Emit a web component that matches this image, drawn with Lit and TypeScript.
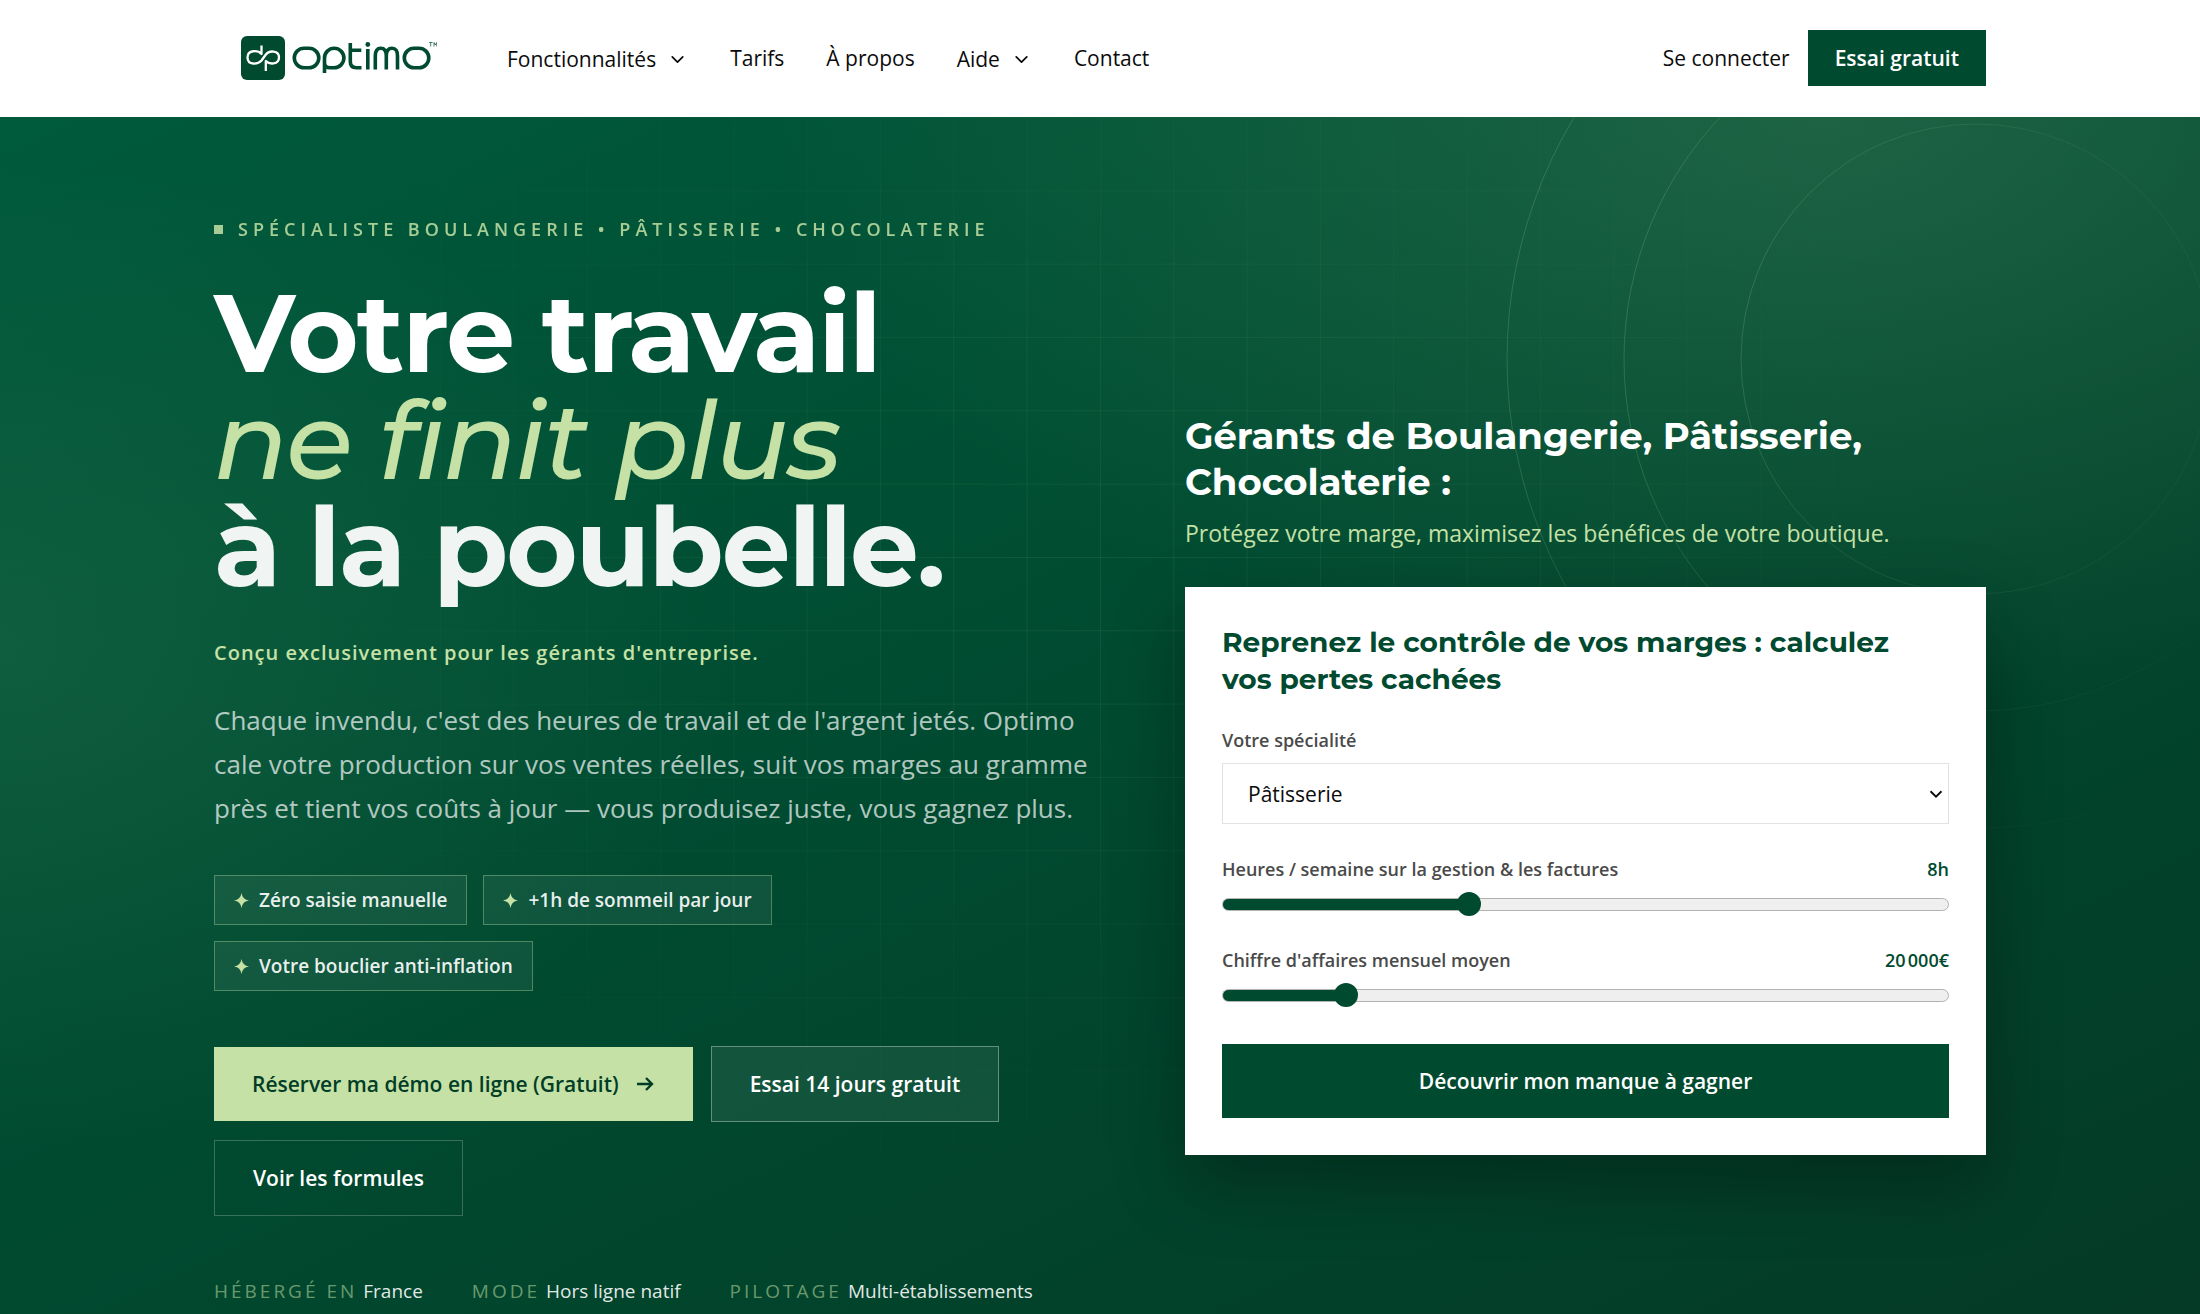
import { LitElement, html, css, svg } from "lit";
import { customElement, state } from "lit/decorators.js";

const NAV = [
  { label: "Fonctionnalités", menu: true },
  { label: "Tarifs", menu: false },
  { label: "À propos", menu: false },
  { label: "Aide", menu: true },
  { label: "Contact", menu: false },
];
const CHIPS = ["Zéro saisie manuelle", "+1h de sommeil par jour", "Votre bouclier anti-inflation"];
const FACTS = [
  ["Hébergé en", "France"],
  ["Mode", "Hors ligne natif"],
  ["Pilotage", "Multi-établissements"],
];
const RINGS = [235, 352, 469];

const chevron = html`<svg class="chev" viewBox="0 0 24 24" aria-hidden="true"><path d="M6 9l6 6 6-6" /></svg>`;

@customElement("app-header")
export class AppHeader extends LitElement {
  static styles = css`
    :host { display: block; background: #fff; }
    .bar { max-width: 1772px; margin: 0 auto; padding: 30px 0 31px; display: flex; align-items: center; }
    .logo { margin-left: 27px; display: block; width: 196px; height: 44px; }
    nav { display: flex; align-items: center; gap: 42px; margin-left: 70px; flex: 1; }
    a, button { font: 500 21px/28px "Open Sans", sans-serif; color: #0b0b0b; text-decoration: none; }
    nav button { background: none; border: 0; padding: 2px 0 0; display: flex; align-items: center; gap: 11px; }
    .chev { width: 21px; height: 21px; fill: none; stroke: currentColor; stroke-width: 2; stroke-linecap: round; stroke-linejoin: round; }
    .actions { display: flex; align-items: center; gap: 18px; }
    .cta { background: #004a30; color: #fff; padding: 14px 27px; font-weight: 600; }
  `;
  render() {
    return html`<header class="bar">
      <a class="logo" href="#" aria-label="Optimo">
        <svg width="196" height="44" viewBox="0 0 196 44" fill="none">
          <rect x="0" y="0" width="44" height="44" rx="6" fill="#004a30" />
          <path d="M20.500 9.500v8.500C17 14 6.500 13.500 6.500 21.500S17 28.500 20.500 24.500l4-5.500C28 14 38 14 38 21.500S28 28.500 24.800 25V35" stroke="#fff" stroke-width="2.300" stroke-linejoin="round" />
          <g stroke="#004a30" stroke-width="3.600">
            <rect x="53.300" y="12.300" width="24.500" height="19.400" rx="9.700" />
            <path d="M83.500 37V22a9.700 9.700 0 0 1 19.400 0a9.700 9.700 0 0 1-9.700 9.700h-4q-5.700 0-5.700-5" />
            <path d="M109.300 7v18.500q0 6.200 6 6.200h5.200M109.300 14.300h11M126.800 13v20.500M134.300 33.500V20q0-7.700 5.500-7.700t5.500 7.700v13.500M145.300 20q0-7.700 5.700-7.700t5.500 7.700v13.500" />
            <rect x="163.300" y="12.300" width="24.500" height="19.400" rx="9.700" />
          </g>
          <circle cx="126.800" cy="8.500" r="2.400" fill="#004a30" />
          <path d="M188 6.500h3.500M189.700 6.500v4M193 10.500v-4l1.400 2.500 1.400-2.500v4" stroke="#004a30" stroke-width=".7" />
        </svg>
      </a>
      <nav aria-label="Navigation principale">
        ${NAV.map((n) => (n.menu ? html`<button type="button">${n.label}${chevron}</button>` : html`<a href="#">${n.label}</a>`))}
      </nav>
      <div class="actions"><a href="#">Se connecter</a><a class="cta" href="#">Essai gratuit</a></div>
    </header>`;
  }
}

@customElement("margin-calculator")
export class MarginCalculator extends LitElement {
  static styles = css`
    :host { display: block; background: #fff; color: #4a4a4a; padding: 37px; box-shadow: 0 28px 68px rgba(0, 0, 0, 0.3); font: 600 18px/26px "Open Sans", sans-serif; }
    h3 { margin: 0 0 29px; padding-right: 36px; color: #004a30; font: 700 28px/37px Montserrat, Inter, sans-serif; }
    label { display: block; }
    .pick { position: relative; margin: 10px 0 32px; }
    select { appearance: none; display: block; width: 100%; height: 61px; border: 1px solid #e2e2e2; border-radius: 0; background: #fff; color: #0b0b0b; font: 400 21px/28px "Open Sans", sans-serif; padding: 0 25px; }
    .chev { position: absolute; right: 2px; top: 20px; width: 22px; height: 22px; fill: none; stroke: #0b0b0b; stroke-width: 2; pointer-events: none; }
    .row { display: flex; justify-content: space-between; }
    output { color: #004a30; }
    input { appearance: none; display: block; width: 100%; height: 24px; margin: 10px 0 31px; background: none; }
    input::-webkit-slider-runnable-track { height: 13px; box-sizing: border-box; border: 1px solid #b2b2b2; border-radius: 7px; background: linear-gradient(to right, #004a30 var(--fill), #efefef var(--fill)); }
    input::-webkit-slider-thumb { appearance: none; width: 24px; height: 24px; margin-top: -7px; border-radius: 50%; background: #004a30; }
    .go { display: block; width: 100%; margin-top: 37px; border: 0; padding: 23px; background: #004a30; color: #fff; font: 600 21px/28px "Open Sans", sans-serif; }
  `;
  @state() private hours = 8;
  @state() private revenue = 20000;

  private slider(id: string, label: string, shown: string, min: number, max: number, step: number, value: number, set: (n: number) => void) {
    const pct = ((value - min) / (max - min)) * 100;
    return html`<div class="row"><label for=${id}>${label}</label><output for=${id}>${shown}</output></div>
      <input id=${id} type="range" min=${min} max=${max} step=${step} .value=${String(value)} style="--fill:${pct}%"
        @input=${(e: Event) => set(Number((e.target as HTMLInputElement).value))} />`;
  }

  render() {
    const euros = String(this.revenue).replace(/(\d)(?=(\d{3})+$)/g, "$1\u202f") + "€";
    return html`<form @submit=${(e: Event) => e.preventDefault()}>
      <h3>Reprenez le contrôle de vos marges : calculez vos pertes cachées</h3>
      <label for="spec">Votre spécialité</label>
      <div class="pick">
        <select id="spec"><option>Boulangerie</option><option selected>Pâtisserie</option><option>Chocolaterie</option></select>
        ${chevron}
      </div>
      ${this.slider("hours", "Heures / semaine sur la gestion & les factures", this.hours + "h", 2, 20, 1, this.hours, (n) => (this.hours = n))}
      ${this.slider("rev", "Chiffre d'affaires mensuel moyen", euros, 5000, 100000, 1000, this.revenue, (n) => (this.revenue = n))}
      <button class="go" type="submit">Découvrir mon manque à gagner</button>
    </form>`;
  }
}

@customElement("app-root")
export class AppRoot extends LitElement {
  static styles = css`
    :host { display: flex; flex-direction: column; height: 100vh; overflow: hidden; font-family: "Open Sans", sans-serif; }
    .hero { position: relative; flex: 1; min-height: 0; overflow: hidden; color: #fff;
      background:
        radial-gradient(ellipse 48% 50% at 83% 0%, rgba(197, 225, 165, 0.15), transparent),
        radial-gradient(ellipse 34% 42% at 0% 45%, rgba(197, 225, 165, 0.08), transparent),
        linear-gradient(155deg, #005a3c 0%, #004a30 50%, #043a26 100%); }
    .mesh { position: absolute; inset: 0;
      background-image: linear-gradient(rgba(197, 225, 165, 0.09) 1px, transparent 1px), linear-gradient(90deg, rgba(197, 225, 165, 0.09) 1px, transparent 1px);
      background-size: calc(100% / 30) calc(100vw / 30);
      mask-image: radial-gradient(ellipse 42% 58% at 50% 38%, #000, transparent); }
    .rings { position: absolute; right: -246px; top: -228px; width: 940px; height: 940px; fill: none; stroke: #c5e1a5; stroke-opacity: 0.18;
      mask-image: radial-gradient(circle 780px at 6% 44%, #000 20%, rgba(0, 0, 0, 0.05) 100%); }
    .wrap { position: relative; max-width: 1772px; margin: 0 auto; padding-top: 98px; display: grid; grid-template-columns: minmax(0, 878fr) minmax(0, 801fr); column-gap: 93px; align-items: center; }
    .eyebrow { display: flex; align-items: center; gap: 15px; margin: 0; color: #c5e1a5; opacity: 0.85; font: 600 18px/28px "Open Sans", sans-serif; letter-spacing: 5px; text-transform: uppercase; }
    .eyebrow::before { content: ""; width: 9px; height: 9px; background: #c5e1a5; }
    h1 { margin: 36px 0 0; font: 700 109px/107px Montserrat, Inter, sans-serif; letter-spacing: -2px; }
    h1 span { display: block; }
    .soft { color: #c5e1a5; font-weight: 500; font-style: italic; }
    .dim { opacity: 0.94; }
    .lead { margin: 39px 0 0; color: #c5e1a5; font: 600 20px/28px "Open Sans", sans-serif; letter-spacing: 1px; }
    .text { margin: 31px 0 0; color: rgba(255, 255, 255, 0.7); font: 400 26px/44px "Open Sans", sans-serif; }
    .chips { display: flex; flex-wrap: wrap; gap: 16px; margin: 45px 0 0; padding: 0; max-width: 640px; list-style: none; }
    .chips li { display: flex; align-items: center; gap: 10px; padding: 11px 19px; border: 1px solid rgba(197, 225, 165, 0.35); background: rgba(255, 255, 255, 0.06); color: rgba(255, 255, 255, 0.92); font: 600 19px/26px "Open Sans", sans-serif; }
    .star { width: 15px; height: 15px; fill: #c5e1a5; }
    .actions { display: flex; flex-wrap: wrap; align-items: center; gap: 18px; margin-top: 55px; }
    .btn { display: flex; align-items: center; gap: 16px; padding: 23px 38px; color: #fff; text-decoration: none; font: 600 21px/28px "Open Sans", sans-serif; }
    .primary { background: #c5e1a5; color: #023d27; }
    .arrow { width: 20px; height: 20px; fill: none; stroke: currentColor; stroke-width: 2.400; }
    .glass { border: 1px solid rgba(255, 255, 255, 0.35); background: rgba(255, 255, 255, 0.07); }
    .ghost { border: 1px solid rgba(255, 255, 255, 0.22); }
    .facts { display: flex; flex-wrap: wrap; gap: 49px; margin: 61px 0 0; padding-bottom: 48px; font: 400 19px/28px "Open Sans", sans-serif; }
    .facts div { display: flex; gap: 6px; }
    dt { color: rgba(197, 225, 165, 0.55); letter-spacing: 3px; text-transform: uppercase; }
    dd { margin: 0; color: rgba(255, 255, 255, 0.9); }
    h2 { margin: 0; font: 700 37px/46px Montserrat, Inter, sans-serif; }
    .sub { margin: 11px 0 37px; color: #c5e1a5; font: 400 23px/34px "Open Sans", sans-serif; }
  `;
  render() {
    return html`<app-header></app-header>
      <main class="hero">
        <div class="mesh"></div>
        <svg class="rings" viewBox="0 0 940 940" aria-hidden="true">
          ${RINGS.map((r) => svg`<circle cx="470" cy="470" r=${r} />`)}
        </svg>
        <div class="wrap">
          <section>
            <p class="eyebrow">Spécialiste boulangerie • pâtisserie • chocolaterie</p>
            <h1><span>Votre travail</span><span class="soft">ne finit plus</span><span class="dim">à la poubelle.</span></h1>
            <p class="lead">Conçu exclusivement pour les gérants d'entreprise.</p>
            <p class="text">Chaque invendu, c'est des heures de travail et de l'argent jetés. Optimo cale votre production sur vos ventes réelles, suit vos marges au gramme près et tient vos coûts à jour — vous produisez juste, vous gagnez plus.</p>
            <ul class="chips">
              ${CHIPS.map((c) => html`<li><svg class="star" viewBox="0 0 16 16" aria-hidden="true"><path d="M8 0Q9 7 16 8 9 9 8 16 7 9 0 8 7 7 8 0z" /></svg>${c}</li>`)}
            </ul>
            <div class="actions">
              <a class="btn primary" href="#">Réserver ma démo en ligne (Gratuit)<svg class="arrow" viewBox="0 0 20 20" aria-hidden="true"><path d="M2 10h15M11 4l6 6-6 6" /></svg></a>
              <a class="btn glass" href="#">Essai 14 jours gratuit</a>
              <a class="btn ghost" href="#">Voir les formules</a>
            </div>
            <dl class="facts">${FACTS.map(([k, v]) => html`<div><dt>${k}</dt><dd>${v}</dd></div>`)}</dl>
          </section>
          <section>
            <h2>Gérants de Boulangerie, Pâtisserie, Chocolaterie :</h2>
            <p class="sub">Protégez votre marge, maximisez les bénéfices de votre boutique.</p>
            <margin-calculator></margin-calculator>
          </section>
        </div>
      </main>`;
  }
}
